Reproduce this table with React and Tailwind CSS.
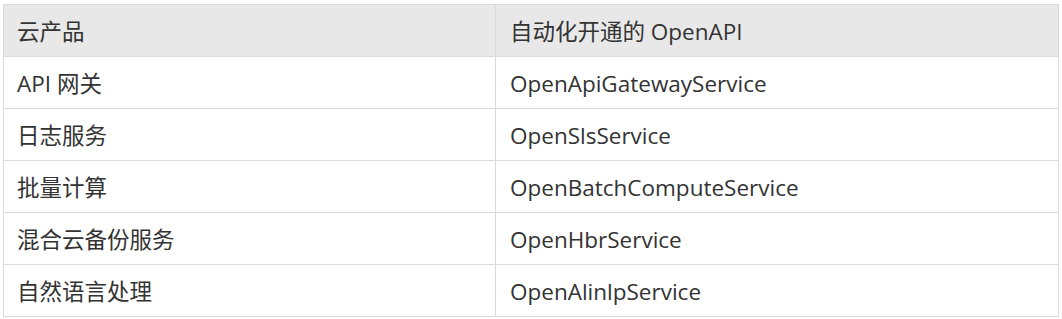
import React from 'react';

const rows = [
    ['API 网关', 'OpenApiGatewayService'],
    ['日志服务', 'OpenSlsService'],
    ['批量计算', 'OpenBatchComputeService'],
    ['混合云备份服务', 'OpenHbrService'],
    ['自然语言处理', 'OpenAlinlpService'],
];

const font = { fontFamily: '"Open Sans", "Noto Sans CJK SC", sans-serif' };

const App = () => {
    return (
        <div className="w-[1062px] h-[319px] bg-white pl-[3px] pt-[4px]" style={font}>
            <div className="w-[1056px] border-l border-t border-[#dadada] text-[22.5px] text-[#333333]">
                <div className="grid grid-cols-[492px_563px] bg-[#e8e8e8]">
                    <div className="h-[52px] flex items-center pl-[13px] pt-[2px] border-r border-b border-[#dadada]">云产品</div>
                    <div className="h-[52px] flex items-center pl-[14px] pt-[2px] border-r border-b border-[#dadada]">自动化开通的 OpenAPI</div>
                </div>
                {rows.map(([product, api]) => (
                    <div key={api} className="grid grid-cols-[492px_563px] bg-white">
                        <div className="h-[52px] flex items-center pl-[13px] pt-[2px] border-r border-b border-[#dadada]">{product}</div>
                        <div className="h-[52px] flex items-center pl-[14px] pt-[2px] border-r border-b border-[#dadada]">{api}</div>
                    </div>
                ))}
            </div>
        </div>
    );
};

export default App;
